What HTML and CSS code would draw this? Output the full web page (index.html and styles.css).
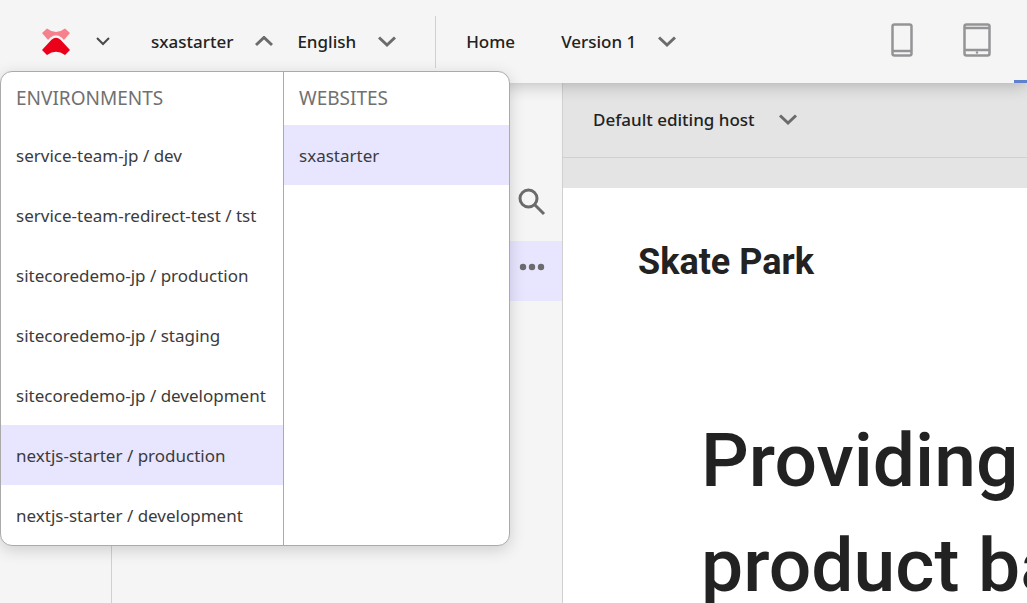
FILE: index.html
```html
<!DOCTYPE html>
<html lang="en">
<head>
<meta charset="utf-8">
<title>Pages editor</title>
<link rel="stylesheet" href="styles.css">
</head>
<body>
<div class="app">
  <header class="topbar">
    <div class="site-area">
      <button class="app-switch" type="button" aria-label="Switch app">
        <svg class="logo" width="28" height="28" viewBox="0 0 28 28">
          <path fill="#f4818c" d="M0 5 5 0.500Q14 7.500 23 0.500L28 5 21.500 12.500 6.500 12.500Z"/>
          <path fill="#f5f5f5" d="M3 15 8.500 9.500Q14 5 19.500 9.500L25 15Z"/>
          <path fill="#eb001a" d="M0 22 9.500 11.800Q14 7.800 18.500 11.800L28 22 23 27Q14 20.500 5 27Z"/>
        </svg>
        <svg class="chevron-small" width="14" height="9" viewBox="0 0 14 9"><path d="M1 1 7 7 13 1"/></svg>
      </button>
      <button class="picker picker-site" type="button" aria-expanded="true"><span>sxastarter</span>
        <svg class="chevron" width="18" height="12" viewBox="0 0 18 12"><path d="M1 9 9 1.500 17 9"/></svg>
      </button>
      <div class="site-menu">
        <section class="menu-column environments">
          <h2 class="menu-title">ENVIRONMENTS</h2>
          <button class="menu-item" type="button">service-team-jp / dev</button>
          <button class="menu-item" type="button">service-team-redirect-test / tst</button>
          <button class="menu-item" type="button">sitecoredemo-jp / production</button>
          <button class="menu-item" type="button">sitecoredemo-jp / staging</button>
          <button class="menu-item" type="button">sitecoredemo-jp / development</button>
          <button class="menu-item selected" type="button">nextjs-starter / production</button>
          <button class="menu-item" type="button">nextjs-starter / development</button>
        </section>
        <section class="menu-column websites">
          <h2 class="menu-title">WEBSITES</h2>
          <button class="menu-item selected" type="button">sxastarter</button>
        </section>
      </div>
    </div>
    <button class="picker picker-language" type="button"><span>English</span>
      <svg class="chevron" width="18" height="12" viewBox="0 0 18 12"><path d="M1 1.500 9 9 17 1.500"/></svg>
    </button>
    <div class="page-area">
      <a class="page-link" href="#home">Home</a>
      <button class="picker" type="button"><span>Version 1</span>
        <svg class="chevron" width="18" height="12" viewBox="0 0 18 12"><path d="M1 1.500 9 9 17 1.500"/></svg>
      </button>
    </div>
    <div class="devices">
      <button class="device" type="button" aria-label="Phone">
        <svg width="22" height="34" viewBox="0 0 22 34"><rect x="1.500" y="1.500" width="19" height="31" rx="2"/><path d="M2 28H20"/></svg>
      </button>
      <button class="device" type="button" aria-label="Tablet">
        <svg width="28" height="34" viewBox="0 0 28 34"><rect x="1.500" y="1.500" width="25" height="31" rx="2"/><path d="M2 5H26M2 27H26"/><circle class="home-dot" cx="14" cy="29.500" r="1.200"/></svg>
      </button>
      <span class="device-active"></span>
    </div>
  </header>
  <div class="workspace">
    <aside class="sidebar">
      <nav class="rail"></nav>
      <div class="panel">
        <button class="panel-action" type="button" aria-label="Search">
          <svg width="28" height="28" viewBox="0 0 28 28" fill="none" stroke="#6b6b6b"><circle cx="10.500" cy="10.500" r="8.500" stroke-width="3"/><path d="M16.500 16.500 26 26" stroke-width="3"/></svg>
        </button>
        <button class="panel-action selected" type="button" aria-label="More options">
          <svg width="28" height="8" viewBox="0 0 28 8" fill="#6b6b6b"><circle cx="5" cy="4" r="3.200"/><circle cx="14" cy="4" r="3.200"/><circle cx="23" cy="4" r="3.200"/></svg>
        </button>
      </div>
    </aside>
    <main class="editor">
      <div class="host-bar">
        <button class="picker" type="button"><span>Default editing host</span>
          <svg class="chevron" width="18" height="12" viewBox="0 0 18 12"><path d="M1 1.500 9 9 17 1.500"/></svg>
        </button>
      </div>
      <article class="canvas">
        <p class="brand">Skate Park</p>
        <h1 class="headline">Providing <br>product ba</h1>
      </article>
    </main>
  </div>
</div>
</body>
</html>
```

FILE: styles.css
```css
* { box-sizing: border-box; }
body {
  margin: 0;
  overflow: hidden;
  background: #f5f5f5;
  color: #222;
  font-family: "Segoe UI", "Noto Sans", sans-serif;
  font-size: 17px;
}
button {
  border: 0;
  padding: 0;
  background: none;
  color: inherit;
  font: inherit;
  cursor: pointer;
}
svg { display: block; flex: none; }
.app {
  display: flex;
  flex-direction: column;
  height: 100vh;
}
.topbar {
  position: relative;
  z-index: 2;
  flex: none;
  display: flex;
  align-items: center;
  height: 83px;
  background: #f5f5f5;
  box-shadow: 0 2px 16px rgba(0, 0, 0, 0.24);
}
.site-area {
  position: relative;
  display: flex;
  align-items: center;
  gap: 41px;
  height: 100%;
  padding-left: 42px;
}
.app-switch {
  display: flex;
  align-items: center;
  gap: 26px;
}
.chevron-small { fill: none; stroke: #4a4a4a; stroke-width: 2; }
.chevron { fill: none; stroke: #6b6b6b; stroke-width: 3; }
.picker {
  display: flex;
  align-items: center;
  gap: 24px;
  font-weight: 500;
  line-height: 24px;
  white-space: nowrap;
}
.topbar .picker { gap: 22px; }
.picker-language { padding: 0 39px 0 24px; }
.page-area {
  display: flex;
  align-items: center;
  gap: 46px;
  height: 52px;
  padding-left: 30px;
  border-left: 1px solid #d0d0d0;
}
.page-link {
  color: inherit;
  font-weight: 500;
  line-height: 24px;
  text-decoration: none;
}
.devices {
  display: flex;
  align-items: center;
  gap: 50px;
  height: 100%;
  margin-left: auto;
  overflow: hidden;
}
.device { padding-bottom: 4px; }
.device svg { fill: none; stroke: #949497; stroke-width: 2.500; }
.device .home-dot { fill: #949497; stroke: none; }
.device-active {
  align-self: flex-end;
  width: 13px;
  height: 3px;
  margin-left: -27px;
  background: #5f80cc;
}
.site-menu {
  position: absolute;
  top: 71px;
  left: 0;
  z-index: 3;
  display: grid;
  grid-template-columns: 283px 225px;
  overflow: hidden;
  border: 1px solid #aaa;
  border-radius: 12px;
  background: #fff;
  box-shadow: 0 4px 16px rgba(0, 0, 0, 0.16);
}
.environments { border-right: 1px solid #aaa; }
.menu-title {
  margin: 0;
  padding-left: 15px;
  color: #707070;
  font-size: 19px;
  font-weight: 400;
  line-height: 53px;
}
.menu-item {
  display: block;
  width: 100%;
  height: 60px;
  padding: 0 15px;
  color: #3b3b3b;
  text-align: left;
  white-space: nowrap;
}
.selected { background: #e8e5ff; }
.workspace {
  flex: 1;
  display: flex;
  min-height: 0;
}
.sidebar {
  flex: none;
  display: flex;
  width: 563px;
  border-right: 1px solid #d0d0d0;
}
.rail {
  width: 112px;
  border-right: 1px solid #d0d0d0;
}
.panel {
  flex: 1;
  padding-top: 80px;
}
.panel-action {
  display: flex;
  align-items: center;
  justify-content: flex-end;
  width: 100%;
  height: 60px;
  padding-right: 16px;
}
.panel-action:first-child { height: 78px; }
.panel-action.selected { padding-bottom: 8px; }
.editor {
  flex: 1;
  display: flex;
  flex-direction: column;
  min-width: 0;
  background: #e4e4e4;
}
.host-bar {
  flex: none;
  display: flex;
  align-items: center;
  height: 75px;
  margin-bottom: 30px;
  padding-left: 30px;
  border-bottom: 1px solid #d0d0d0;
}
.canvas {
  flex: 1;
  min-height: 0;
  padding: 53px 0 0 75px;
  overflow: hidden;
  background: #fff;
  font-family: Roboto, sans-serif;
}
.brand {
  margin: 0;
  font-size: 36px;
  font-weight: 700;
  line-height: 42px;
}
.headline {
  margin: 125px 0 0 63px;
  font-size: 75px;
  font-weight: 500;
  line-height: 105px;
  white-space: nowrap;
}
```
